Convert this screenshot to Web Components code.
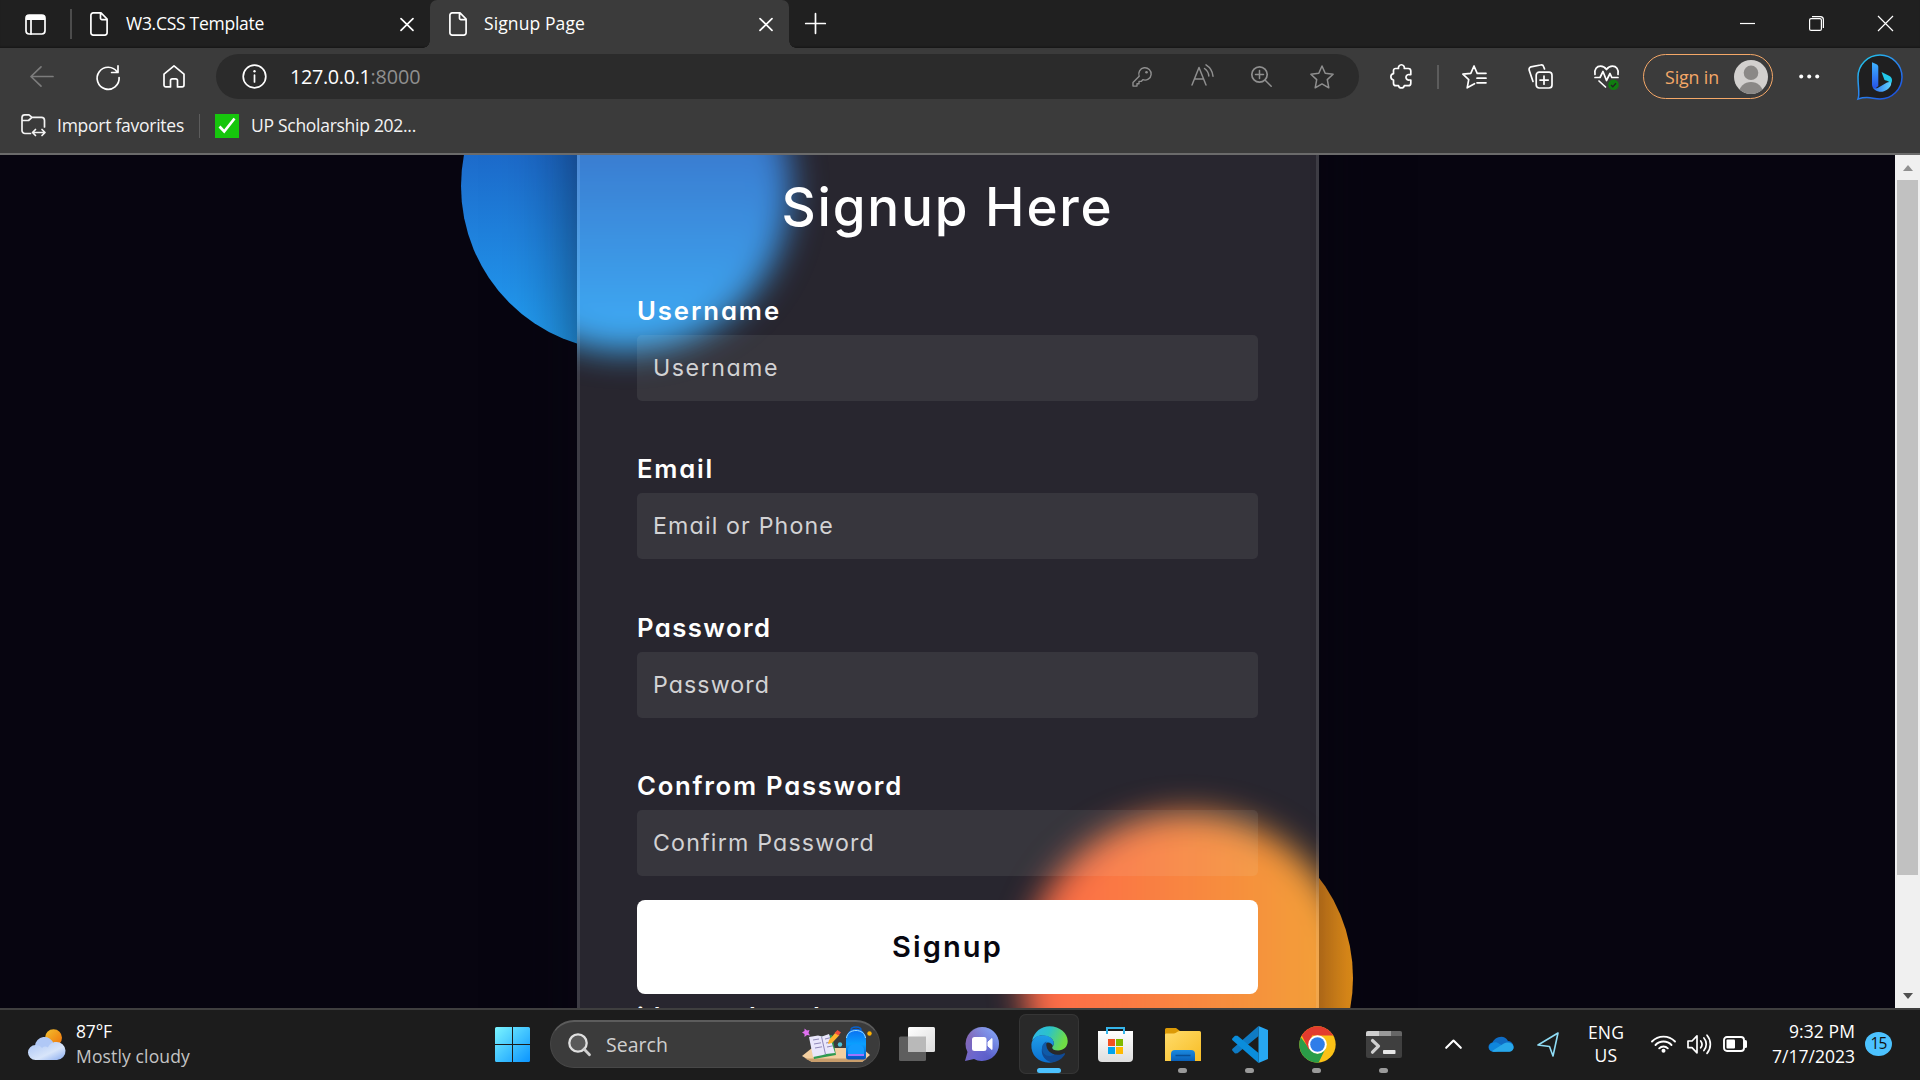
<!DOCTYPE html>
<html lang="en">
<head>
<meta charset="utf-8">
<title>Signup Page</title>
<style>
html,body{margin:0;height:100%;overflow:hidden;background:#070510}
</style>
</head>
<body>
<desktop-screen></desktop-screen>
<script>
// Registers an element whose shadow root is cloned from a template.
function define(name, html) {
  const t = document.createElement('template');
  t.innerHTML = html;
  customElements.define(name, class extends HTMLElement {
    constructor() {
      super();
      this.attachShadow({ mode: 'open' }).appendChild(t.content.cloneNode(true));
    }
  });
}

// Single-line text; letter spacing is adjusted so that it takes the width given in "w".
customElements.define('fit-text', class extends HTMLElement {
  connectedCallback() {
    if (this.shadowRoot) return;
    this.attachShadow({ mode: 'open' }).innerHTML =
      '<style>:host{display:block;flex:none;white-space:nowrap}span{display:inline-block}</style><span><slot></slot></span>';
    const s = this.shadowRoot.querySelector('span');
    const w = parseFloat(this.getAttribute('w'));
    const n = this.textContent.length;
    const natural = s.getBoundingClientRect().width;
    if (w && natural) s.style.letterSpacing = ((w - natural) / n).toFixed(3) + 'px';
    this.style.width = w + 'px';
  }
});

const S = 'fill="none" stroke="currentColor" stroke-linecap="round" stroke-linejoin="round" stroke-width="1.7"';
const ICONS = {
  workspace: [21, 21, `<rect x="1" y="1" width="19" height="19" rx="3.2" ${S}/><path d="M1 6V4a3 3 0 0 1 3-3h13a3 3 0 0 1 3 3v2z" fill="#fff"/><path d="M6 6v14" ${S}/>`],
  doc: [18, 24, `<path d="M3.2 .9H11l6.1 6.1v13.7a2.3 2.3 0 0 1-2.3 2.4H3.2A2.3 2.3 0 0 1 .9 20.700V3.200A2.300 2.300 0 0 1 3.200 .9zM10.500 1.200v5a1.400 1.400 0 0 0 1.400 1.400H17" ${S}/>`],
  close: [14, 13, `<path d="M1 .6l12 11.800M13 .6L1 12.400" ${S}/>`],
  plus: [21, 21, `<path d="M10.500 .7v19.600M.7 10.500h19.600" ${S}/>`],
  min: [15, 15, `<path d="M0 7.500h15" stroke="#fff" stroke-width="1.200"/>`],
  max: [15, 15, `<rect x=".6" y="2.600" width="11.800" height="11.800" rx="1.500" fill="none" stroke="#fff" stroke-width="1.200"/><path d="M3 .6h8.500a3 3 0 0 1 2.900 3V12" fill="none" stroke="#fff" stroke-width="1.200"/>`],
  winclose: [15, 15, `<path d="M0 0l15 15M15 0L0 15" stroke="#fff" stroke-width="1.200"/>`],
  back: [24, 21, `<path d="M23 10.500H1M11 .9L1 10.500l10 9.600" ${S}/>`],
  refresh: [24, 24, `<path d="M21.300 7.200A11 11 0 1 0 23.100 12.500M22 .9v6.600h-6.400" ${S}/>`],
  home: [22, 23, `<path d="M1 9.200L11 .9l10 8.300V20a1.900 1.900 0 0 1-1.900 1.900H14.500v-6.300a1.800 1.800 0 0 0-1.800-1.800H9.300a1.800 1.800 0 0 0-1.800 1.800v6.300H2.900A1.900 1.900 0 0 1 1 20z" ${S}/>`],
  info: [25, 25, `<circle cx="12.500" cy="12.500" r="11.300" ${S}/><path d="M12.500 11v7" ${S}/><circle cx="12.500" cy="7.300" r="1.200" fill="currentColor"/>`],
  key: [20, 20, `<path d="M7.200 9.200A6.200 6.200 0 1 1 10.800 12.700L9.200 14.400H7v2.300H5v2.400H1V15.400z" ${S} style="stroke-width:1.400"/><circle cx="14.500" cy="5.200" r="1.300" fill="currentColor"/>`],
  read: [23, 22, `<path d="M1 21L8 3.500 15 21M3.600 15h9M13.500 4.500a10 10 0 0 1 4.300 7.500M15 .9a15 15 0 0 1 7 11.300" ${S} style="stroke-width:1.500"/>`],
  zoomin: [21, 21, `<circle cx="8.500" cy="8.500" r="7.700" ${S}/><path d="M14.200 14.200l6 6M8.500 4.500v8M4.500 8.500h8" ${S} style="stroke-width:1.500"/>`],
  star: [24, 24, `<path d="M12 1l3.200 7.300 7.900.9-5.800 5.400 1.500 8.200L12 18.900l-6.800 3.900 1.500-8.200L.9 9.200l7.900-.9z" ${S} style="stroke-width:1.500"/>`],
  puzzle: [22, 25, `<path d="M5.500 4.500H8.500a3 3 0 1 1 5.800 0h4a2.500 2.500 0 0 1 2.500 2.500v3.600h-1.300a2.800 2.800 0 1 0 0 5.400h1.300v3.200a2.500 2.500 0 0 1-2.500 2.500h-4a3 3 0 0 1-5.800 0H6a2.500 2.500 0 0 1-2.500-2.500V16a3.200 3.200 0 0 1 0-6.300V6.500a2 2 0 0 1 2-2z" ${S}/>`],
  favs: [25, 24, `<path d="M16 8.300h-.8L12 1 8.800 8.300.9 9.200l5.800 5.400-1.500 8.200 7.300-4.100M16 8.300h8M15 13.200h9M15 17.800h9" ${S}/>`],
  collect: [25, 25, `<rect x="8.200" y="8.200" width="15.800" height="15.800" rx="3" ${S}/><path d="M16 12v8.200M12 16.100h8.200M5 17.500L1.200 6.200a2.600 2.600 0 0 1 1.700-3.300L12.500 1a2.600 2.600 0 0 1 3.200 1.700l.8 2.300" ${S}/>`],
  heart: [25, 25, `<path d="M1 9.500C0 4 3 1.200 6.500 1.200c3 0 4.800 1.600 6 3.300 1.200-1.700 3-3.300 6-3.300 3.500 0 6.500 2.800 5.500 8.300M1 12.500h5l3-6 3.500 9 3.500-7 1.800 4H24M5 16l6.500 6" ${S}/><circle cx="19.500" cy="19.700" r="5.300" fill="#107c10"/><path d="M17 20l1.800 1.700 3.200-3.500" fill="none" stroke="#222" stroke-width="1.300"/>`],
  avatar: [34, 34, `<defs><clipPath id="c"><circle cx="17" cy="17" r="17"/></clipPath></defs><g clip-path="url(#c)"><rect width="34" height="34" fill="#d2d0ce"/><circle cx="17" cy="12.800" r="7.300" fill="#8a8886"/><ellipse cx="17" cy="33" rx="12" ry="11" fill="#8a8886"/></g>`],
  dots: [21, 5, `<g fill="#fff"><circle cx="2.200" cy="2.500" r="2"/><circle cx="10.200" cy="2.500" r="2"/><circle cx="18.200" cy="2.500" r="2"/></g>`],
  bing: [46, 46, `<defs><linearGradient id="a" x1="0" y1="0" x2=".8" y2="1"><stop offset="0" stop-color="#1fd0e8"/><stop offset=".5" stop-color="#2a8bf0"/><stop offset="1" stop-color="#1b50e0"/></linearGradient><linearGradient id="b" x2="0" y2="1"><stop stop-color="#3fb4ff"/><stop offset="1" stop-color="#2550e8"/></linearGradient><linearGradient id="d"><stop stop-color="#2b6bf0"/><stop offset="1" stop-color="#5fd4ff"/></linearGradient></defs><path d="M1 45C3 40 1 34 1 23A22 22 0 1 1 23 45C15 45 12 41.500 1 45z" fill="#1f1f20" stroke="url(#a)" stroke-width="1.500"/><path d="M15 8.300l4.500 1.900c1.200.6 1.800 1.500 1.800 2.800V32l-3.500 3c-1.800-.8-2.800-2.500-2.800-4.500z" fill="url(#b)"/><path d="M24.500 18l8 4c3.200 2 3.200 5.500 1 8.500-.5-2.500-2-3.500-6-4.500z" fill="#22c9ea"/><path d="M15.500 32.500c1 2 3.500 2.500 6 1l8.500-5c2.500-1.200 5-.5 4 2.500-1.500 4-7 7.500-11.500 6.700-4-.7-6.500-3-7-5.200z" fill="url(#d)"/>`],
  importfav: [25, 23, `<path d="M9.500 19.500H4a3 3 0 0 1-3-3V3.500A2.700 2.700 0 0 1 3.700 .9H8l3 2.500h9.500a3 3 0 0 1 3 3V13M1 6.500h6.500L11 3.400M12 18.500h11.500M14.500 15.500l-3 3 3 3M21 15.500l3 3-3 3" ${S}/>`],
  check: [24, 24, `<rect width="24" height="24" fill="#16c60c"/><path d="M4.500 12.500l4.700 5L19.500 4.500" fill="none" stroke="#fff" stroke-width="2.700"/>`],
  weather: [37, 31, `<defs><linearGradient id="s" x2="1" y2="1"><stop stop-color="#f2c12e"/><stop offset="1" stop-color="#f0700a"/></linearGradient><linearGradient id="k" x2="1" y2="1"><stop stop-color="#a9c4f5"/><stop offset=".6" stop-color="#d8e5fa"/><stop offset="1" stop-color="#86aaf0"/></linearGradient></defs><circle cx="25.500" cy="8.800" r="8.500" fill="url(#s)"/><path d="M7 17a9.500 9.500 0 0 1 18.500-2.500L27 23H8z" fill="#b0c8f6"/><path d="M7.500 31a7.500 7.500 0 0 1 0-15c3 0 5 1 6.500 3a5 5 0 0 1 6-.5c1-3 4-5.500 8-5.500a9 9 0 0 1 1 18z" fill="url(#k)"/>`],
  win: [35, 35, `<defs><linearGradient id="w" x2="1" y2="1" gradientUnits="objectBoundingBox"><stop stop-color="#7bf5ff"/><stop offset="1" stop-color="#0a94ff"/></linearGradient></defs><path d="M1.500 0H17v17H0V1.500A1.500 1.500 0 0 1 1.500 0zM18 0h15.500A1.500 1.500 0 0 1 35 1.500V17H18zM0 18h17v17H1.500A1.500 1.500 0 0 1 0 33.500zM18 18h17v15.500a1.500 1.500 0 0 1-1.500 1.500H18z" fill="url(#w)"/>`],
  search: [23, 23, `<circle cx="10" cy="10" r="8.700" fill="#5a5a5a" stroke="#e0e0e0" stroke-width="2.300"/><path d="M16 16l5.500 5.700" stroke="#d0d0d0" stroke-width="2.800" stroke-linecap="round"/>`],
  school: [70, 37, `<defs><linearGradient id="p" x2="0" y2="1"><stop stop-color="#0a6cf0"/><stop offset=".5" stop-color="#0aa0ff"/><stop offset="1" stop-color="#0650c0"/></linearGradient></defs><path d="M0 30l10-8h50l8 7-8 7H10z" fill="#f3cfa0"/><path d="M3 32.500l7 3.500h50l5-3.500z" fill="#c99e6c"/><path d="M8 12l22-3 4 20-22 4z" fill="#2f9a50"/><path d="M7 11l9-1.500 4 1 7-2.500 6 19-9 1-3 1-10 2z" fill="#e9e6fb"/><path d="M19.500 10.500l4 18M11 14l6-1M12 18l7-1.200M13 22l7-1.200M23 13l5-1.200M24 17l6-1.200M25 21l6-1.200" stroke="#8f88b8" fill="none"/><path d="M26 18l1-4 7-8 3.500 3-7.500 8z" fill="#ffb52e"/><path d="M32.500 7l3-3 3.500 2.500-2.500 3z" fill="#f0503c"/><path d="M2.500 2.500l2.500 2 2.500-.5-1 3 1.500 2.500-3-.5-2.500 2V8L0 6.500 2.500 5z" fill="#e070f0"/><path d="M49 4c0-4 10-4 10 0" fill="none" stroke="#0a60c8" stroke-width="1.500"/><path d="M44 14c0-15 20-15 20 0v17a2.500 2.500 0 0 1-2.500 2.500h-15A2.500 2.500 0 0 1 44 31z" fill="url(#p)"/><path d="M44.500 12c1-10 18-10 19 0" fill="none" stroke="#9fe0ff" stroke-width="1"/><path d="M46 30v-6c0-8 16-8 16 0v6z" fill="#129bff"/><path d="M46 29h16" stroke="#b070ff" stroke-width="1.800"/><circle cx="38" cy="18.500" r="2.200" fill="#4fc3d8"/><circle cx="67.500" cy="7.500" r="2.200" fill="#ffb000"/>`],
  taskview: [36, 34, `<defs><linearGradient id="t" x2="1" y2="1"><stop stop-color="#fff"/><stop offset="1" stop-color="#dcdcdc"/></linearGradient></defs><rect y="9.500" width="27" height="24.500" rx="1.500" fill="#5e5e5e"/><rect x="9" width="27" height="25" rx="1.500" fill="url(#t)"/><path d="M9 9.500h18V25H10.500A1.500 1.500 0 0 1 9 23.500z" fill="#b9b9b9"/>`],
  chat: [34, 34, `<defs><linearGradient id="g" x1="0" y1=".2" x2="1" y2=".8"><stop stop-color="#8a68b0"/><stop offset=".5" stop-color="#6a66cf"/><stop offset="1" stop-color="#5259c6"/></linearGradient><linearGradient id="h" x1="1" y1="0" x2=".4" y2=".6"><stop stop-color="#8ab0fa"/><stop offset="1" stop-color="#8ab0fa" stop-opacity="0"/></linearGradient></defs><path id="q" d="M17 0a17 17 0 1 1-8 32L0 34l2.500-9A17 17 0 0 1 17 0z" fill="url(#g)"/><circle cx="17" cy="17" r="17" fill="url(#h)"/><rect x="7" y="10" width="14.500" height="14" rx="2.500" fill="#fff"/><path d="M23 15l4-3.500v11L23 19z" fill="#fff" stroke="#fff" stroke-linejoin="round"/>`],
  edge: [37, 37, `<defs><linearGradient id="e1" x2="1" y2=".3"><stop stop-color="#2fb4ee"/><stop offset=".5" stop-color="#2cc3c8"/><stop offset="1" stop-color="#6fdd45"/></linearGradient><linearGradient id="e2" x2="0" y2="1"><stop stop-color="#1f9de8"/><stop offset="1" stop-color="#0b6fd0"/></linearGradient></defs><path d="M1 15C3 5.500 10.500 .3 18.500 .3 29 .3 36.700 7.500 36.700 15c0 6-4.500 9.500-9.500 9.500-4 0-6-1.300-6-2.800 0-1.200 1.600-1.800 1.600-4.500C22.800 12 16 9 10 9.500c-4 .4-7.500 3-9 5.500z" fill="url(#e1)"/><path d="M.4 18.500C1 12.500 6 9.300 11.500 9.300c6 0 11.300 3.400 11.300 7.700 0 1.300-.3 2.200-.9 3C20.500 16.500 16.500 15 14 18c-5 5.500-2 15.500 8 18.300C10 38.500 -.5 30.500 .4 18.500z" fill="url(#e2)"/><path d="M15.500 16.500c-7.500 3-6.500 18.500 6.500 19.800 5-.5 9.700-4 12-8 .4-.8-.4-1.400-1-1-2 1-4 1.500-6.200 1.500-8 0-13-5.500-11.300-12.300z" fill="#114a93"/><path d="M11 22c0-3 2-5.500 4.500-6.500-1.500 5.500 2 11.500 8 13-6 3.500-12.500.5-12.500-6.500z" fill="#0f5aa8"/>`],
  store: [36, 35, `<defs><linearGradient id="m" x2="0" y2="1"><stop stop-color="#fff"/><stop offset="1" stop-color="#dedede"/></linearGradient></defs><path d="M0 4h35v27a4 4 0 0 1-4 4H4a4 4 0 0 1-4-4z" fill="url(#m)"/><path d="M9 7V1h17v6" fill="none" stroke="#35b5ea" stroke-width="2"/><path d="M10 12h7v7h-7z" fill="#f25022"/><path d="M18 12h7v7h-7z" fill="#7fba00"/><path d="M10 20h7v7h-7z" fill="#00a4ef"/><path d="M18 20h7v7h-7z" fill="#ffb900"/>`],
  folder: [36, 33, `<defs><linearGradient id="f" x2="1" y2="1"><stop stop-color="#ffdc6b"/><stop offset="1" stop-color="#f8bd25"/></linearGradient><linearGradient id="fb" x2="0" y2="1"><stop stop-color="#1a8ae0"/><stop offset="1" stop-color="#0a60b8"/></linearGradient></defs><path d="M0 1.500A1.500 1.500 0 0 1 1.500 0H11l4 3-4 6H0z" fill="#dc9a06"/><path d="M0 7c0-1 .5-1.500 1.500-1.500H9c2.500 0 3-2.500 5.500-2.500h20A1.500 1.500 0 0 1 36 4.500V33H0z" fill="url(#f)"/><path d="M6 33v-7a4 4 0 0 1 4-4h16a4 4 0 0 1 4 4v7z" fill="url(#fb)"/><path d="M10.500 27.500h15" stroke="#084f96" stroke-width="1.500"/>`],
  vscode: [37, 37, `<path d="M26.500 0L36 4v29l-9.500 4z" fill="#27a7f2"/><path d="M26.500 0v10L5.500 27.200 3 27.500.5 24.700c-.6-.6-.5-1.500 0-2z" fill="#0f7bc4"/><path d="M.5 12.300L3 9.700l2.500.1 21 17.200v10L.5 14.200c-.6-.6-.6-1.300 0-1.900z" fill="#0a8ddb"/>`],
  chrome: [37, 37, `<defs><clipPath id="cc"><circle cx="18.500" cy="18.500" r="18.200"/></clipPath></defs><g clip-path="url(#cc)"><rect width="37" height="37" fill="#fbc116"/><path d="M-2 6L10.500 23 18.500 28l8-5.500L18 40H-5z" fill="#2a9d48"/><path d="M2 8L10 24 13 9.500h27V-5H0z" fill="#e33b2e"/></g><circle cx="18.500" cy="18.500" r="9.300" fill="#fff"/><circle cx="18.500" cy="18.500" r="7.300" fill="#2f7de9"/>`],
  term: [36, 27, `<path d="M0 2a2 2 0 0 1 2-2h32a2 2 0 0 1 2 2v23a2 2 0 0 1-2 2H2a2 2 0 0 1-2-2z" fill="#3f3f3f"/><path d="M0 5V2a2 2 0 0 1 2-2h11v5z" fill="#cfcfcf"/><path d="M13 0h12v5H13z" fill="#9a9a9a"/><path d="M25 0h9a2 2 0 0 1 2 2v3H25z" fill="#666"/><path d="M6.500 9.500l6 5.700-6 6" fill="none" stroke="#d0d0d0" stroke-width="3.200" stroke-linecap="round" stroke-linejoin="round"/><rect x="17" y="19" width="12.500" height="4" rx=".8" fill="#e6e6e6"/>`],
  chev: [17, 10, `<path d="M1.200 8.800L8.500 1.500l7.300 7.300" ${S} style="stroke-width:2.100"/>`],
  cloud: [25, 16, `<path d="M4.500 15.500A4.500 4.500 0 0 1 3.500 6.500C5 1.500 15-3 19 5c5 .5 6 5 5.500 7.500l-4 3z" fill="#0f6cc4"/><path d="M1 8.500c2.500-3 7-3 9.500-.6L20 13l-14 2.800C1 16-1.500 12 1 8.500z" fill="#0f86dd"/><path d="M3 15l11-7c4-2.500 7-1.500 8-.7 4.500 2.500 2.500 8.500-1.500 8.500H4.500z" fill="#28a8ea"/>`],
  nav: [22, 25, `<path d="M21 1L1 13l11.500 1.500L16 24z" fill="none" stroke="#8fdcf5" stroke-width="1.600" stroke-linejoin="round"/>`],
  wifi: [25, 19, `<path d="M1 7.500a16 16 0 0 1 23 0M4.500 11a11 11 0 0 1 16 0M8.200 14.300a6 6 0 0 1 8.600 0" ${S} style="stroke-width:1.900"/><circle cx="12.500" cy="16.700" r="2" fill="#fff"/>`],
  sound: [25, 21, `<path d="M1 7h4l5-5.200v17L5 13.600H1z M13.700 7a5.500 5.500 0 0 1 0 6.800M16.900 4a9.500 9.500 0 0 1 0 12.500M20 1.200a14 14 0 0 1 0 18.200" ${S}/>`],
  battery: [25, 16, `<rect x="1" y="1" width="20" height="14" rx="3" ${S} style="stroke-width:1.900"/><rect x="3.500" y="3.500" width="8.500" height="9" rx="1" fill="#fff"/><path d="M22.500 5.500v5" stroke="#fff" stroke-width="3" stroke-linecap="round"/>`]
};
// Inline SVG glyph, drawn at its natural pixel size.
customElements.define('ui-icon', class extends HTMLElement {
  connectedCallback() {
    if (this.shadowRoot) return;
    const [w, h, body] = ICONS[this.getAttribute('name')];
    this.attachShadow({ mode: 'open' }).innerHTML =
      `<style>:host{display:block;flex:none;width:${w}px;height:${h}px}svg{display:block;overflow:visible}</style><svg width="${w}" height="${h}" viewBox="0 0 ${w} ${h}">${body}</svg>`;
  }
});

define('browser-tabs', `<style>
:host{display:flex;height:48px;background:#202020;color:#fff;font-size:17.5px;line-height:46px;box-shadow:inset 0 -2px 2px -1px #161616}
.row{display:flex;align-items:center;flex:none;height:48px}
.sep{width:2px;height:30px;background:#4c4c4c;margin:0 18px 0 24px}
.tab{height:48px;display:flex;align-items:center;position:relative;box-sizing:border-box}
.one{width:340px}
.two{width:359px;background:#3b3b3b;border-radius:7px 7px 0 0;padding-left:19px}
.two::before,.two::after{content:"";position:absolute;bottom:0;width:7px;height:7px}
.two::before{left:-7px;background:radial-gradient(circle at 0 0,transparent 6.500px,#3b3b3b 7px)}
.two::after{right:-7px;background:radial-gradient(circle at 100% 0,transparent 6.500px,#3b3b3b 7px)}
fit-text{margin-left:17px;height:48px}
.x{margin-left:auto}
</style>
<div class="row"><ui-icon name="workspace" style="margin-left:25px"></ui-icon><span class="sep"></span></div>
<div class="tab one"><ui-icon name="doc"></ui-icon><fit-text w="138" style="margin-left:18px">W3.CSS Template</fit-text><ui-icon class="x" name="close" style="margin-right:16px;margin-top:1px"></ui-icon></div>
<div class="tab two"><ui-icon name="doc"></ui-icon><fit-text w="101">Signup Page</fit-text><ui-icon class="x" name="close" style="margin-right:16px;margin-top:1px"></ui-icon></div>
<div class="row" style="margin-left:16px;height:46px"><ui-icon name="plus"></ui-icon></div>
<div class="row" style="margin-left:auto;margin-right:27px;gap:54px;height:47px"><ui-icon name="min"></ui-icon><ui-icon name="max"></ui-icon><ui-icon name="winclose"></ui-icon></div>`);

define('address-bar', `<style>
:host{display:flex;align-items:center;box-sizing:border-box;width:1143px;height:45px;border-radius:23px;background:#2b2b2b;padding:0 25px 0 26px;margin-left:32px;flex:none;font-size:19.800px;line-height:44px;color:#fff}
.port{color:#8f8f8f}
.tools{display:flex;align-items:center;color:#8f8f8f;margin-left:auto}
</style>
<ui-icon name="info"></ui-icon><fit-text w="80.500" style="margin-left:23px">127.0.0.1</fit-text><fit-text w="50" class="port">:8000</fit-text>
<div class="tools"><ui-icon name="key"></ui-icon><ui-icon name="read" style="margin-left:39px;margin-top:-3px"></ui-icon><ui-icon name="zoomin" style="margin-left:37px"></ui-icon><ui-icon name="star" style="margin-left:38px"></ui-icon></div>`);

define('account-pill', `<style>
:host{display:flex;align-items:center;box-sizing:border-box;width:130px;height:45px;border:1.500px solid #f5a868;border-radius:23px;padding:0 4px 0 21px;margin-left:24px;color:#f5a868;font-size:17.800px;line-height:42px;flex:none}
ui-icon{margin-left:auto}
</style><fit-text w="54">Sign in</fit-text><ui-icon name="avatar"></ui-icon>`);

define('browser-toolbar', `<style>
:host{display:flex;align-items:center;height:57px;background:#3b3b3b;color:#fff}
.sep{width:2px;height:24px;background:#5c5c5c;margin-left:25px}
</style>
<ui-icon name="back" style="margin-left:30px;color:#7c7c7c"></ui-icon><ui-icon name="refresh" style="margin-left:42px"></ui-icon><ui-icon name="home" style="margin-left:43px;margin-right:-1px"></ui-icon>
<address-bar></address-bar>
<ui-icon name="puzzle" style="margin-left:31px"></ui-icon><span class="sep"></span><ui-icon name="favs" style="margin-left:23px"></ui-icon><ui-icon name="collect" style="margin-left:41px"></ui-icon><ui-icon name="heart" style="margin-left:41px;margin-top:2px"></ui-icon>
<account-pill></account-pill><ui-icon name="dots" style="margin-left:26px"></ui-icon><ui-icon name="bing" style="margin-left:37px"></ui-icon>`);

define('favorites-bar', `<style>
:host{display:flex;align-items:center;height:48px;background:#3b3b3b;color:#f3f3f3;font-size:17.500px;line-height:41px;border-bottom:2px solid #6b6b6b}
.r{display:flex;align-items:center;height:42px;margin-bottom:7px}
fit-text{height:42px}
.sep{width:1px;height:24px;background:#5c5c5c;margin:0 15px 0 15px}
</style><div class="r"><ui-icon name="importfav" style="margin-left:21px"></ui-icon><fit-text w="127" style="margin-left:11px">Import favorites</fit-text><span class="sep"></span><ui-icon name="check"></ui-icon><fit-text w="165" style="margin-left:12px">UP Scholarship 202...</fit-text></div>`);

define('form-field', `<style>
:host{display:block;height:158.600px}
.label{height:35px;line-height:22.500px;font-size:25.700px;font-weight:600;color:#fff}
.box{height:66px;border-radius:5px;background:rgba(242,255,236,.075);padding-left:16px;font-size:23.200px;line-height:67px;font-weight:400;color:#d2d2d4;box-sizing:border-box}
</style><div class="label"><slot name="label"></slot></div><div class="box"><slot name="hint"></slot></div>`);

// Glass panel: its back layer holds the softened discs, the tint lies over them.
define('signup-form', `<style>
:host{display:block;box-sizing:border-box;width:742px;height:1250px;margin:-100px 0 0 577px;box-shadow:0 0 66px rgba(8,7,16,.6);font-family:Inter,"Open Sans",sans-serif;font-feature-settings:"cv11","ss03";color:#fff;position:relative}
.glass{position:absolute;inset:0;overflow:hidden;background:#090611}
.c{position:absolute;width:330px;height:330px;border-radius:50%;filter:blur(16.500px)}
.blue{left:-116px;top:-34px;background:linear-gradient(#1845ad,#23a2f6)}
.orange{left:446px;top:758px;background:linear-gradient(to right,#ff512f,#f09819)}
.body{position:relative;box-sizing:border-box;height:1250px;padding:100px 58px 0 57px;border:3px solid rgba(255,255,255,.1);background:rgba(255,255,255,.13)}
.title{height:70px;line-height:69px;font-size:53px;font-weight:500;display:flex;justify-content:center;margin:15px 0 56.700px}
.btn{height:94px;width:621px;border-radius:8px;background:#fff;color:#080710;display:flex;justify-content:center;font-size:29px;font-weight:600;line-height:93px;margin-top:-34px}
.foot{font-size:25.700px;font-weight:600;line-height:36px;margin-top:4.500px}
form-field{width:621px}
</style>
<div class="glass"><div class="c blue"></div><div class="c orange"></div></div>
<div class="body">
<div class="title"><fit-text w="332">Signup Here</fit-text></div>
<form-field><fit-text slot="label" w="144">Username</fit-text><fit-text slot="hint" w="126">Username</fit-text></form-field>
<form-field><fit-text slot="label" w="77">Email</fit-text><fit-text slot="hint" w="181">Email or Phone</fit-text></form-field>
<form-field><fit-text slot="label" w="134.500">Password</fit-text><fit-text slot="hint" w="117">Password</fit-text></form-field>
<form-field><fit-text slot="label" w="266">Confrom Password</fit-text><fit-text slot="hint" w="222">Confirm Password</fit-text></form-field>
<div class="btn"><fit-text w="111">Signup</fit-text></div>
<div class="foot"><fit-text w="325">i have already account</fit-text></div>
</div>`);

define('page-scrollbar', `<style>
:host{display:flex;flex-direction:column;align-items:center;width:25px;height:853px;background:#f0f0f0;flex:none}
.thumb{width:21px;height:695px;background:#c1c1c1}
.a{height:25px;display:flex;align-items:center}
.up::after,.dn::after{content:"";border:5.500px solid transparent}
.up::after{border-bottom:6px solid #909090;border-top:0}
.dn{margin-top:auto}.dn::after{border-top:6px solid #505050;border-bottom:0}
</style><div class="a up"></div><div class="thumb"></div><div class="a dn"></div>`);

define('web-page', `<style>
:host{display:flex;height:853px;background:#070510;overflow:hidden;position:relative}
.view{flex:1;height:853px;overflow:hidden;position:relative;display:flow-root}
.c{position:absolute;width:330px;height:330px;border-radius:50%}
.blue{left:461px;top:-134px;background:linear-gradient(#1845ad,#23a2f6)}
.orange{left:1023px;top:658px;background:linear-gradient(to right,#ff512f,#f09819)}
</style><div class="view"><div class="c blue"></div><div class="c orange"></div><signup-form></signup-form></div><page-scrollbar></page-scrollbar>`);

define('search-box', `<style>
:host{display:flex;align-items:center;box-sizing:border-box;width:330px;height:48px;border-radius:24px;background:#3b3b3b;border:1px solid #474747;border-top:2px solid #5c5c5c;padding:0 7px 0 17px;margin-left:20px;flex:none;color:#cfcfcf;font-size:19.500px;line-height:44px}
.p{margin-left:auto}
</style><ui-icon name="search"></ui-icon><fit-text w="62" style="margin-left:15px">Search</fit-text><ui-icon class="p" name="school"></ui-icon>`);

define('task-app', `<style>
:host{display:flex;flex-direction:column;align-items:center;justify-content:center;box-sizing:border-box;width:60px;height:60px;margin-right:7px;border-radius:7px;position:relative;flex:none}
:host([active]){background:#292929;box-shadow:inset 0 0 0 1px #353535}
i{position:absolute;bottom:1px;left:25px;width:9px;height:5px;border-radius:3px;background:#9a9a9a;display:none}
:host([open]) i{display:block}
:host([active]) i{display:block;left:18px;width:24px;background:#4cc2ff}
</style><slot></slot><i></i>`);

define('system-tray', `<style>
:host{display:flex;align-items:center;height:68px;margin-left:auto;color:#fff;font-size:17.500px;line-height:24.500px}
.col{display:flex;flex-direction:column;height:49px;margin-top:-1px}
.badge{width:27px;height:24px;border-radius:50%;background:#4cc2ff;color:#111;font-size:15.500px;line-height:23px;display:flex;justify-content:center;margin:0 28px 0 10px}
</style>
<ui-icon name="chev"></ui-icon><ui-icon name="cloud" style="margin-left:27px"></ui-icon><ui-icon name="nav" style="margin-left:23px"></ui-icon>
<div class="col" style="align-items:center;margin-left:29px;margin-top:2px;line-height:23.500px"><fit-text w="36">ENG</fit-text><fit-text w="23">US</fit-text></div>
<ui-icon name="wifi" style="margin-left:27px;margin-top:-2px"></ui-icon><ui-icon name="sound" style="margin-left:11px"></ui-icon><ui-icon name="battery" style="margin-left:11px"></ui-icon>
<div class="col" style="align-items:flex-end;margin-left:24px"><fit-text w="66">9:32 PM</fit-text><fit-text w="83">7/17/2023</fit-text></div>
<div class="badge"><fit-text w="16">15</fit-text></div>`);

define('task-bar', `<style>
:host{display:flex;align-items:center;height:72px;box-sizing:border-box;background:#1c1c1c;border-top:2px solid #3f3f3f;padding-bottom:2px}
.w{font-size:17.500px;line-height:24.500px;color:#fff;margin:-1px 0 0 11px;width:115px}
.d{color:#c4c4c4}
.apps{display:flex;align-items:center;margin-left:7px;flex:none}
</style>
<ui-icon name="weather" style="margin-left:28px"></ui-icon>
<div class="w"><fit-text w="36">87°F</fit-text><fit-text class="d" w="114">Mostly cloudy</fit-text></div>
<ui-icon name="win" style="margin-left:304px"></ui-icon>
<search-box></search-box>
<div class="apps">
<task-app><ui-icon name="taskview"></ui-icon></task-app>
<task-app style="margin-right:6px;margin-left:-2px"><ui-icon name="chat"></ui-icon></task-app>
<task-app active style="margin-left:1px"><ui-icon name="edge"></ui-icon></task-app>
<task-app><ui-icon name="store"></ui-icon></task-app>
<task-app open><ui-icon name="folder"></ui-icon></task-app>
<task-app open><ui-icon name="vscode"></ui-icon></task-app>
<task-app open><ui-icon name="chrome"></ui-icon></task-app>
<task-app open><ui-icon name="term"></ui-icon></task-app>
</div>
<system-tray></system-tray>`);

define('desktop-screen', `<style>
:host{display:block;width:1920px;height:1080px;overflow:hidden;font-family:"Open Sans","Noto Sans",sans-serif}
</style><browser-tabs></browser-tabs><browser-toolbar></browser-toolbar><favorites-bar></favorites-bar><web-page></web-page><task-bar></task-bar>`);
</script>
</body>
</html>
